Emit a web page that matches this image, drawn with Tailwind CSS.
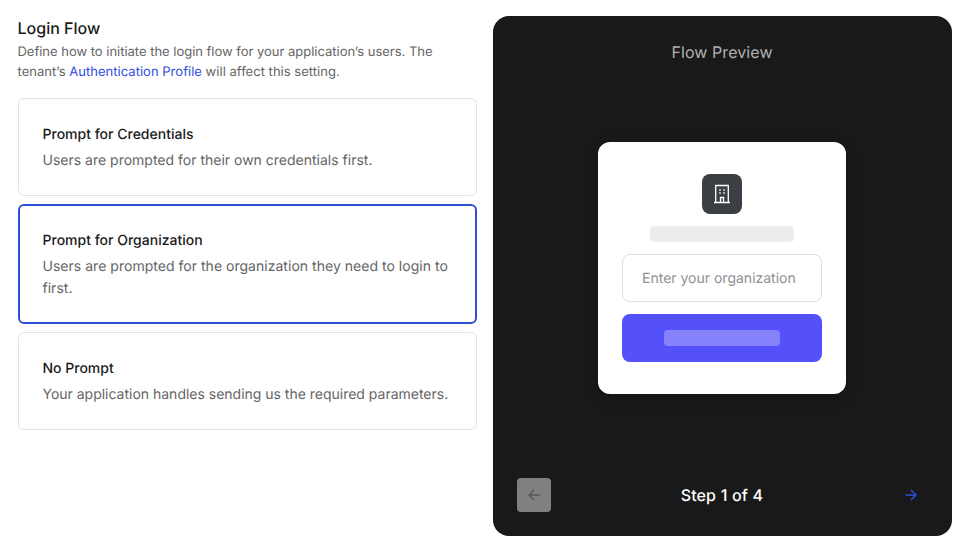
<!DOCTYPE html>
<html lang="en">
<head>
<meta charset="utf-8">
<title>Login Flow</title>
<script src="https://cdn.jsdelivr.net/npm/@tailwindcss/browser@4"></script>
</head>
<body class="h-[543px] overflow-hidden bg-white font-['Inter',sans-serif] text-[#1a1a1a] antialiased [text-rendering:geometricPrecision]">
<main class="flex gap-4 pl-[18px] pr-[13px] pt-4">
  <section class="w-[459px] shrink-0">
    <h1 class="-ml-[0.5px] text-base leading-6 font-medium">Login Flow</h1>
    <p class="-ml-[0.5px] pt-[2px] text-[13px] leading-5 text-[#656565]"><span class="tracking-[-0.015px]">Define how to initiate the login flow for your application’s users. The</span><br><span class="tracking-[0.025px]">tenant’s <a class="text-[#2f4fe0]">Authentication Profile</a> will affect this setting.</span></p>
    <div class="mt-4 flex flex-col gap-2">
      <div class="h-[98px] rounded-md border border-[#e3e3e5] pl-[23.5px] pt-[25px]">
        <h2 class="text-sm leading-[22px] font-medium">Prompt for Credentials</h2>
        <p class="mt-1 text-sm leading-[22px] text-[#656565]">Users are prompted for their own credentials first.</p>
      </div>
      <div class="h-[120px] rounded-md border-2 border-[#2f4fdb] pl-[22.5px] pt-6">
        <h2 class="text-sm leading-[22px] font-medium">Prompt for Organization</h2>
        <p class="mt-1 text-sm leading-[22px] tracking-[0.025px] text-[#656565]">Users are prompted for the organization they need to login to<br>first.</p>
      </div>
      <div class="h-[98px] rounded-md border border-[#e3e3e5] pl-[23.5px] pt-[25px]">
        <h2 class="text-sm leading-[22px] font-medium">No Prompt</h2>
        <p class="mt-1 text-sm leading-[22px] tracking-[-0.01px] text-[#656565]">Your application handles sending us the required parameters.</p>
      </div>
    </div>
  </section>
  <section class="flex h-[520px] w-[459px] flex-col rounded-2xl bg-[#191919] p-6">
    <h2 class="pr-px text-center text-base leading-6 tracking-[0.08px] text-[#b0b0b0]">Flow Preview</h2>
    <div class="ml-[81px] mt-[78px] flex h-[252px] w-[248px] flex-col items-center rounded-xl bg-white px-6 pt-8 shadow-[0_4px_12px_rgba(0,0,0,0.25)]">
      <div class="flex size-10 items-center justify-center rounded-lg bg-[#3b3e43]">
        <svg class="size-6" viewBox="0 0 24 24" fill="none" stroke="white" stroke-width="1.3"><path d="M4 20.5h16M5.7 20.5v-17h12.6v17M10.5 20.5v-5h3v5"/><path fill="#a9abad" stroke="none" d="M9 7h2v2H9zM13 7h2v2h-2zM9 10h2v2H9zM13 10h2v2h-2z"/></svg>
      </div>
      <div class="mt-3 h-4 w-36 rounded bg-[#ecedef]"></div>
      <div class="mt-3 flex h-12 w-full items-center rounded-lg border border-[#dfdfe1] pl-[19px] pt-[2px] text-sm text-[#8f9095]">Enter your organization</div>
      <div class="mt-3 flex h-12 w-full items-center justify-center rounded-lg bg-[#5451fa] pr-px pb-px"><div class="h-4 w-29 rounded bg-[#8682fb]"></div></div>
    </div>
    <div class="mt-auto flex items-center justify-between">
      <div class="flex size-[34px] items-center justify-center rounded bg-[#808080]"><svg class="size-4" viewBox="0 0 16 16" fill="none" stroke="#555" stroke-width="1.4" stroke-linejoin="round"><path d="M13.5 8H3M8 3 3 8l5 5"/></svg></div>
      <span class="pr-px text-base leading-6 font-medium tracking-[0.05px] [word-spacing:0.4px] text-white">Step 1 of 4</span>
      <div class="flex size-[34px] items-center justify-center"><svg class="size-4" viewBox="0 0 16 16" fill="none" stroke="#2f4fdb" stroke-width="1.4" stroke-linejoin="round"><path d="M2.5 8H13M8 3l5 5-5 5"/></svg></div>
    </div>
  </section>
</main>
</body>
</html>
